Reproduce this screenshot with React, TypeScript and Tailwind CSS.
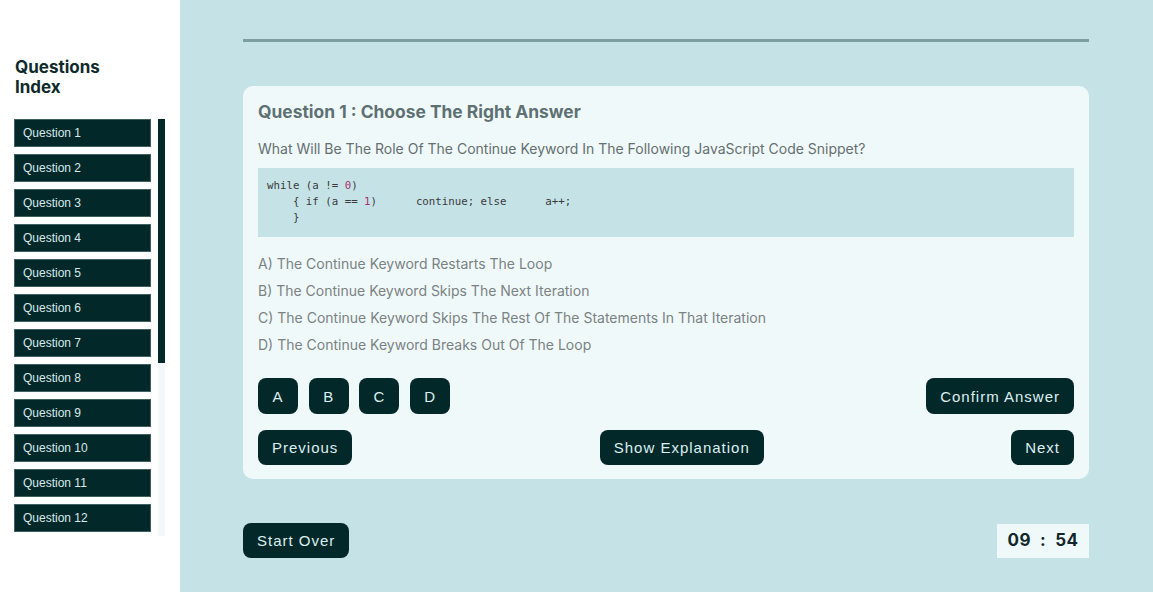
import React from 'react';

const QUESTIONS = Array.from({ length: 12 }, (_, i) => `Question ${i + 1}`);

const OPTIONS = [
  'A) The Continue Keyword Restarts The Loop',
  'B) The Continue Keyword Skips The Next Iteration',
  'C) The Continue Keyword Skips The Rest Of The Statements In That Iteration',
  'D) The Continue Keyword Breaks Out Of The Loop',
];

const btn =
  "bg-[#03282a] text-[#dcefef] rounded-[8px] font-['Liberation_Sans',Arial,sans-serif] text-[15px] tracking-[1px] leading-none";

export default function App() {
  return (
    <div className="flex min-h-screen h-[592px] font-['Inter',sans-serif]">
      {/* sidebar */}
      <aside className="w-[180px] shrink-0 bg-white px-[14px] pt-[57px]">
        <h2 className="pl-px text-[17px] leading-[20px] font-bold text-[#0f2a2b] w-[110px]">Questions Index</h2>
        <div className="mt-[22px] flex gap-[7px]">
          <div className="flex flex-col gap-[7px]">
            {QUESTIONS.map((q) => (
              <div
                key={q}
                className="w-[137px] h-[28px] shrink-0 flex items-center pl-[8px] bg-[#03282a] border border-[#3f5f60] text-[#d7e9e9] text-[12px] font-['Liberation_Sans',Arial,sans-serif]"
              >
                {q}
              </div>
            ))}
          </div>
          {/* scroll bar */}
          <div className="w-[7px] h-[417px] bg-[#f5f8f8]">
            <div className="h-[244px] bg-[#03282a]" />
          </div>
        </div>
      </aside>

      {/* main */}
      <main className="flex-1 bg-[#c5e3e7] pl-[63px] pr-[64px] pt-[39px]">
        <div className="h-[3px] bg-[#7e9fa1]" />

        <section className="mt-[44px] bg-[#f0f9fa] rounded-[10px] px-[15px] pt-[14px] pb-[14px]">
          <h1 className="text-[17.4px] leading-[24px] font-bold text-[#5e7172]">
            Question 1 : Choose The Right Answer
          </h1>
          <p className="mt-[15px] text-[14px] leading-[20px] text-[#646f70]">
            What Will Be The Role Of The Continue Keyword In The Following JavaScript Code Snippet?
          </p>

          <pre className="mt-[9px] bg-[#c5e3e7] pl-[9px] pt-[10px] pb-[11px] text-[10.75px] leading-[16px] text-[#3a3a3a] font-['DejaVu_Sans_Mono',monospace]">
{`while (a != `}<span className="text-[#a3336c]">0</span>{`)
    { if (a == `}<span className="text-[#a3336c]">1</span>{`)      continue; else      a++;
    }`}
          </pre>

          <div className="mt-[17px] flex flex-col gap-[7px]">
            {OPTIONS.map((o) => (
              <p key={o} className="text-[14px] leading-[20px] text-[#7a8283]">
                {o}
              </p>
            ))}
          </div>

          <div className="mt-[23px] flex items-center justify-between">
            <div className="flex gap-[10.7px]">
              {['A', 'B', 'C', 'D'].map((l) => (
                <button key={l} className={`${btn} w-[40px] h-[36px] flex items-center justify-center`}>
                  {l}
                </button>
              ))}
            </div>
            <button className={`${btn} h-[36px] px-[14px]`}>Confirm Answer</button>
          </div>

          <div className="mt-[16px] flex items-center justify-between">
            <button className={`${btn} h-[35px] px-[14px]`}>Previous</button>
            <button className={`${btn} h-[35px] px-[14px]`}>Show Explanation</button>
            <button className={`${btn} h-[35px] px-[14px]`}>Next</button>
          </div>
        </section>

        <div className="mt-[44px] flex items-center justify-between">
          <button className={`${btn} h-[35px] px-[14px]`}>Start Over</button>
          <div className="h-[34px] w-[92px] bg-[#f0f9fa] flex items-center justify-center text-[17px] font-bold text-[#10282a] whitespace-pre tracking-[0.5px]">
            09  :  54
          </div>
        </div>
      </main>
    </div>
  );
}
